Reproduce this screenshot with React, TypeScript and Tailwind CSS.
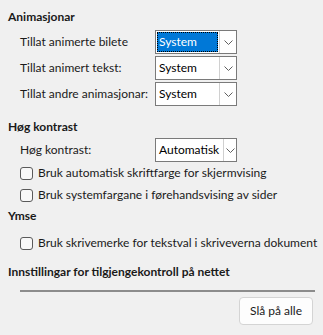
import React from 'react';

function Combo({ value, focused = false, narrowButton = false }: { value: string; focused?: boolean; narrowButton?: boolean }) {
  return (
    <div className="flex h-[24px] w-[82px] border border-[#7a7a7a] bg-white">
      <div className="min-w-0 flex-1 p-px">
        <div
          className={
            focused
              ? 'flex h-full items-center overflow-hidden whitespace-nowrap border border-dotted border-black bg-[#0078d7] pl-px text-white'
              : 'flex h-full items-center overflow-hidden whitespace-nowrap pl-[2px] text-black'
          }
        >
          {value}
        </div>
      </div>
      <div className={`flex ${narrowButton ? 'w-[13px]' : 'w-[17px]'} shrink-0 items-center justify-center border-l border-[#d0d0d0]`}>
        <svg width="9" height="5" viewBox="0 0 9 5" fill="none">
          <path d="M0.5 0.5 L4.5 4.5 L8.5 0.5" stroke="#606060" strokeWidth="1" />
        </svg>
      </div>
    </div>
  );
}

function Row({ label, children }: { label: string; children: React.ReactNode }) {
  return (
    <div className="flex items-center pl-[20px]">
      <div className="w-[135px] whitespace-nowrap">{label}</div>
      {children}
    </div>
  );
}

function Check({ label }: { label: string }) {
  return (
    <div className="flex h-[22px] items-center whitespace-nowrap pl-[20px]">
      <div className="h-[13px] w-[13px] shrink-0 rounded-[3px] border border-[#5a5a5a] bg-[#f8f8f8]" />
      <span className="ml-[5px]">{label}</span>
    </div>
  );
}

function Heading({ children }: { children: React.ReactNode }) {
  return <div className="flex h-[20px] items-center whitespace-nowrap pl-[8px] font-bold">{children}</div>;
}

export default function App() {
  return (
    <div
      className="flex h-[335px] w-[323px] flex-col overflow-hidden bg-[#f0f0f0] pt-[7px] text-[12px] text-[#1a1a1a]"
      style={{ fontFamily: 'Lato, "Open Sans", sans-serif' }}
    >
      <Heading>Animasjonar</Heading>
      <div className="mt-[3px] flex flex-col gap-[2px]">
        <Row label="Tillat animerte bilete">
          <Combo value="System" focused />
        </Row>
        <Row label="Tillat animert tekst:">
          <Combo value="System" />
        </Row>
        <Row label="Tillat andre animasjonar:">
          <Combo value="System" />
        </Row>
      </div>

      <div className="mt-[11px]">
        <Heading>Høg kontrast</Heading>
      </div>
      <div className="mt-[1px]">
        <Row label="Høg kontrast:">
          <Combo value="Automatisk" narrowButton />
        </Row>
      </div>
      <Check label="Bruk automatisk skriftfarge for skjermvising" />
      <Check label="Bruk systemfargane i førehandsvising av sider" />

      <Heading>Ymse</Heading>
      <div className="mt-[6px]">
        <Check label="Bruk skrivemerke for tekstval i skriveverna dokument" />
      </div>

      <div className="mt-[8px]">
        <Heading>Innstillingar for tilgjengekontroll på nettet</Heading>
      </div>
      <div className="ml-[20px] mr-[8px] mt-[8px] h-[2px] shrink-0 bg-[#8c8c8c]" />
      <div className="mt-[5px] flex justify-end pr-[10px]">
        <button className="h-[28px] w-[74px] rounded-[4px] border border-[#d4d4d4] bg-[#fdfdfd] text-[12px] text-[#1a1a1a]">
          Slå på alle
        </button>
      </div>
    </div>
  );
}
